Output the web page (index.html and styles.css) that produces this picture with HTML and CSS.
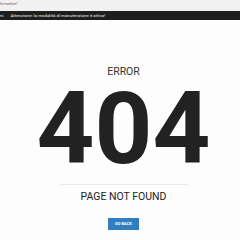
FILE: index.html
```html
<!DOCTYPE html>
<html lang="it">
<head>
    <meta charset="UTF-8">
    <meta name="viewport" content="width=device-width, initial-scale=1.0">
    <title>Pagina non trovata</title>
    <link rel="stylesheet" href="styles.css">
</head>
<body>
    <div class="urlbar">lo-twelve/</div>
    <div class="adminbar">
        <span class="adminbar-item">ni</span>
        <span class="adminbar-item notice">Attenzione: la modalità di manutenzione è attiva!</span>
    </div>
    <main class="notfound">
        <p class="error-label">ERROR</p>
        <h1 class="error-code">404</h1>
        <div class="divider"></div>
        <p class="error-text">PAGE NOT FOUND</p>
        <a class="back-button" href="#">GO BACK</a>
    </main>
</body>
</html>
```

FILE: styles.css
```css
body {
    margin: 0;
    font-family: Roboto, "Liberation Sans", sans-serif;
    background: #fdfdfd;
    color: #222;
}
.urlbar {
    height: 11px;
    line-height: 8px;
    font-size: 4px;
    color: #555;
    background: #f1f1f1;
    white-space: nowrap;
    overflow: hidden;
}
.adminbar {
    height: 9px;
    display: flex;
    align-items: center;
    gap: 7px;
    background: #1e1e1e;
    color: #eee;
    font-size: 4.4px;
    white-space: nowrap;
    overflow: hidden;
}
.adminbar-item {
    line-height: 9px;
}
.notfound {
    display: flex;
    flex-direction: column;
    align-items: center;
    padding-left: 7px;
}
.error-label {
    margin: 46px 0 0;
    font-size: 10.5px;
    line-height: 12px;
    color: #333;
}
.error-code {
    margin: 14px 0 0;
    font-size: 101px;
    line-height: 74px;
    font-weight: 700;
    color: #222;
}
.divider {
    margin-top: 18px;
    width: 128px;
    height: 1px;
    background: #e8e8e8;
}
.error-text {
    margin: 6px 0 0;
    font-size: 10.5px;
    line-height: 12px;
    color: #222;
}
.back-button {
    margin-top: 15px;
    width: 31px;
    height: 12px;
    line-height: 12px;
    text-align: center;
    background: #2f7fc0;
    color: #fff;
    font-size: 4px;
    font-weight: 700;
    text-decoration: none;
}
```
